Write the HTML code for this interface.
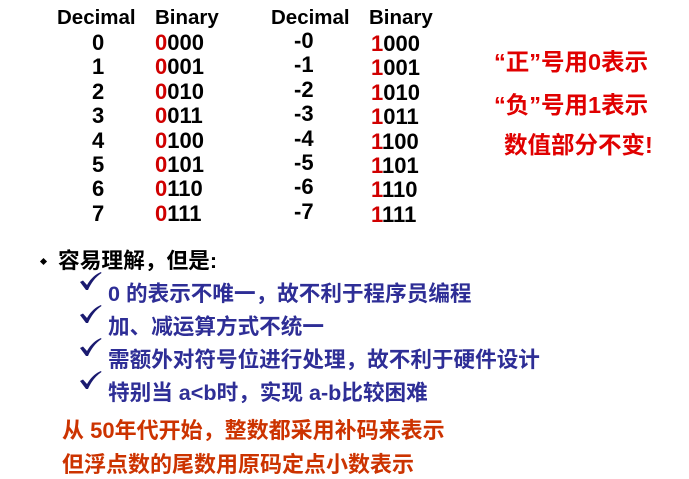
<!DOCTYPE html>
<html><head><meta charset="utf-8"><style>
body{margin:0;width:689px;height:479px;background:#fff;position:relative;overflow:hidden;font-family:"Liberation Sans","Noto Sans CJK SC",sans-serif;font-weight:bold}
.a{position:absolute;white-space:nowrap}
.t{font-size:22px;color:#000;line-height:24px}
.h{font-size:20.5px}
.r{color:#d00000}
.red{color:#e00000;font-size:23.5px}
.blue{color:#2e2e96;font-size:21.6px}
.org{color:#cc3300;font-size:22px}
</style></head><body>
<div class="a t h" style="left:57px;top:6px">Decimal</div>
<div class="a t h" style="left:155px;top:6px">Binary</div>
<div class="a t h" style="left:271px;top:6px">Decimal</div>
<div class="a t h" style="left:369px;top:6px">Binary</div>

<div class="a t" style="left:92px;top:31px;line-height:24.4px;text-align:center">0<br>1<br>2<br>3<br>4<br>5<br>6<br>7</div>
<div class="a t" style="left:155px;top:31px;line-height:24.4px"><span class="r">0</span>000<br><span class="r">0</span>001<br><span class="r">0</span>010<br><span class="r">0</span>011<br><span class="r">0</span>100<br><span class="r">0</span>101<br><span class="r">0</span>110<br><span class="r">0</span>111</div>
<div class="a t" style="left:294px;top:29px;line-height:24.4px">-0<br>-1<br>-2<br>-3<br>-4<br>-5<br>-6<br>-7</div>
<div class="a t" style="left:371px;top:32px;line-height:24.4px"><span class="r">1</span>000<br><span class="r">1</span>001<br><span class="r">1</span>010<br><span class="r">1</span>011<br><span class="r">1</span>100<br><span class="r">1</span>101<br><span class="r">1</span>110<br><span class="r">1</span>111</div>

<div class="a red" style="left:494px;top:43px">“正”号用0表示</div>
<div class="a red" style="left:494px;top:86px">“负”号用1表示</div>
<div class="a red" style="left:504px;top:126px">数值部分不变!</div>

<div class="a" style="left:41px;top:259px;width:5px;height:5px;background:#000;transform:rotate(45deg)"></div>
<div class="a" style="left:58px;top:244px;font-size:21.7px;color:#000">容易理解，但是:</div>

<svg class="a" style="left:80px;top:272px" width="24" height="130" viewBox="0 0 24 130">
<g fill="#1a1a70">
<path id="c" d="M0 10 L3 8.5 L7 13 C11 6 16 2 21 0 L21.5 1 C15.5 5 11 11 8 18 L6 18 Z"/>
<use href="#c" y="33"/><use href="#c" y="66"/><use href="#c" y="99"/>
</g></svg>
<div class="a blue" style="left:108px;top:277px">0 的表示不唯一，故不利于程序员编程</div>
<div class="a blue" style="left:108px;top:310px">加、减运算方式不统一</div>
<div class="a blue" style="left:108px;top:343px">需额外对符号位进行处理，故不利于硬件设计</div>
<div class="a blue" style="left:108px;top:376px">特别当 a&lt;b时，实现 a-b比较困难</div>

<div class="a org" style="left:62px;top:413px">从 50年代开始，整数都采用补码来表示</div>
<div class="a org" style="left:62px;top:447px">但浮点数的尾数用原码定点小数表示</div>
</body></html>
